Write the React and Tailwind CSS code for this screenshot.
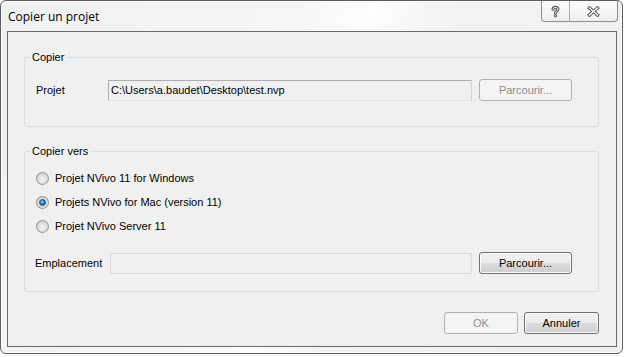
import React from 'react';

function Radio({ checked, label }) {
  return (
    <div className="flex h-4 items-center">
      <span className="ml-[11px] flex h-[13px] w-[13px] items-center justify-center rounded-full border border-[#8f8f8f] bg-[radial-gradient(circle_at_50%_60%,#f4f4f4_0%,#dcdcdc_55%,#c8c8c8_100%)]">
        {checked && (
          <span className="h-[7px] w-[7px] rounded-full border border-[#1c4a72] bg-[radial-gradient(circle_at_40%_35%,#9ad6ff_0%,#2b86c4_45%,#0f3e66_100%)]" />
        )}
      </span>
      <span className="ml-[6px]">{label}</span>
    </div>
  );
}

function Button({ children, disabled, className = '' }) {
  if (disabled) {
    return (
      <div className={`flex h-[22px] items-center justify-center rounded-[3px] border border-[#adb2b5] bg-[#f4f4f4] text-[#8c8c8c] ${className}`}>
        {children}
      </div>
    );
  }
  return (
    <div className={`flex h-[22px] items-center justify-center rounded-[3px] border border-[#707070] bg-[linear-gradient(to_bottom,#f2f2f2_0%,#ebebeb_50%,#dddddd_50%,#cfcfcf_100%)] text-black shadow-[inset_0_0_0_1px_#fbfbfb] ${className}`}>
      {children}
    </div>
  );
}

function CaptionButtons() {
  return (
    <div className="mr-[4px] ml-auto flex h-[21px] w-[77px] rounded-b-[4px] border-x border-b border-[#8d8d8d] bg-[linear-gradient(to_bottom,#fdfdfd,#eeeeee)]">
      <div className="flex w-[28px] items-center justify-center border-r border-[#a9a9a9]">
        <svg width="9" height="13" viewBox="0 0 9 13">
          <path d="M2 4.2 C2 1.8 7 1.6 7 4.2 C7 6 4.5 6 4.5 8" fill="none" stroke="#5a5a5a" strokeWidth="3" strokeLinecap="round" />
          <path d="M2 4.2 C2 1.8 7 1.6 7 4.2 C7 6 4.5 6 4.5 8" fill="none" stroke="#ffffff" strokeWidth="1" strokeLinecap="round" />
          <circle cx="4.5" cy="10.8" r="1.6" fill="#5a5a5a" />
          <circle cx="4.5" cy="10.8" r="0.6" fill="#ffffff" />
        </svg>
      </div>
      <div className="flex flex-1 items-center justify-center">
        <svg width="13" height="11" viewBox="0 0 13 11">
          <path d="M2.5 2 L10.5 9 M10.5 2 L2.5 9" fill="none" stroke="#5a5a5a" strokeWidth="3.4" strokeLinecap="square" />
          <path d="M2.5 2 L10.5 9 M10.5 2 L2.5 9" fill="none" stroke="#ffffff" strokeWidth="1.4" strokeLinecap="square" />
        </svg>
      </div>
    </div>
  );
}

export default function App() {
  return (
    <div className="h-[357px] w-[626px] bg-white font-['Liberation_Sans',Arial,sans-serif] text-[11px] leading-[14px] text-black">
      <div className="flex h-[354px] w-[623px] flex-col rounded-[6px] border border-[#5e5e5e] bg-[linear-gradient(110deg,#eef0f1_0%,#f5f6f7_40%,#fdfdfd_50%,#f2f3f4_60%,#eceeef_100%)] shadow-[inset_0_0_0_1px_#ffffff]">
        <div className="flex h-[30px] items-start">
          <span className="mt-[8px] ml-[7px] font-['Open_Sans',sans-serif] text-[12px] leading-[16px]">Copier un projet</span>
          <CaptionButtons />
        </div>
        <div className="ml-[6px] flex h-[316px] w-[610px] flex-col border border-[#6a6a6a] bg-[#f0f0f0] pt-[18px] pr-[17px] pl-[16px]">
          <fieldset className="h-[77px] rounded-[2px] border border-[#d5dfe5] pt-[15px]">
            <legend className="ml-[5px] px-[2px] leading-[14px]">Copier</legend>
            <div className="flex h-[22px] items-center">
              <span className="ml-[11px] w-[72px]">Projet</span>
              <div className="flex h-[21px] w-[364px] items-center border border-[#abadb3] border-r-[#c9d6e4] border-b-[#dfe5ec] bg-[#f0f0f0] pl-[2px]">
                C:\Users\a.baudet\Desktop\test.nvp
              </div>
              <Button disabled className="ml-[7px] w-[93px]">Parcourir...</Button>
            </div>
          </fieldset>
          <fieldset className="mt-[17px] h-[148px] rounded-[2px] border border-[#d5dfe5] pt-[12px]">
            <legend className="ml-[5px] px-[2px] leading-[14px]">Copier vers</legend>
            <div className="flex flex-col gap-[8px]">
              <Radio label="Projet NVivo 11 for Windows" />
              <Radio checked label="Projets NVivo for Mac (version 11)" />
              <Radio label="Projet NVivo Server 11" />
            </div>
            <div className="mt-[18px] flex h-[22px] items-center">
              <span className="ml-[10px] w-[75px]">Emplacement</span>
              <div className="h-[21px] w-[362px] border border-[#dadada] bg-[#f0f0f0]" />
              <Button className="ml-[7px] w-[93px]">Parcourir...</Button>
            </div>
          </fieldset>
          <div className="mt-[20px] flex justify-end gap-[6px]">
            <Button disabled className="w-[74px]">OK</Button>
            <Button className="w-[75px]">Annuler</Button>
          </div>
        </div>
      </div>
    </div>
  );
}
